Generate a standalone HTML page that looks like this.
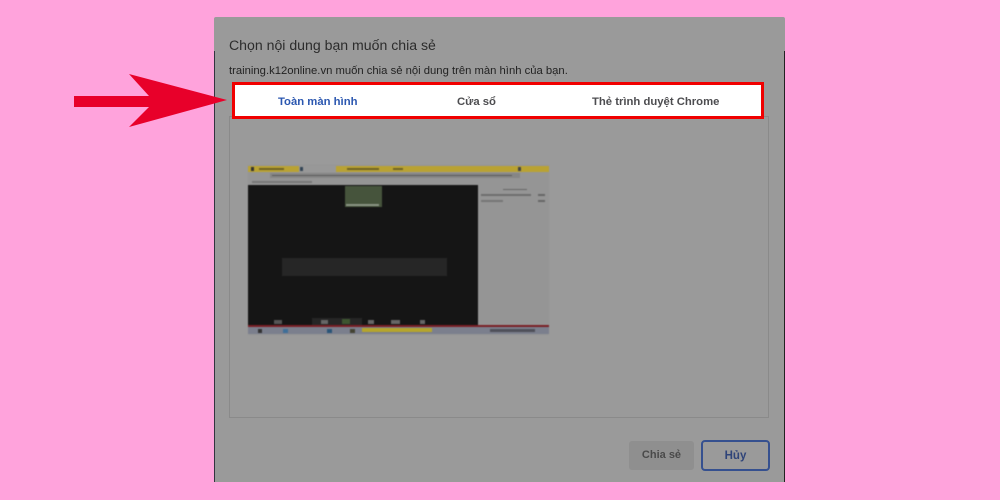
<!DOCTYPE html>
<html><head><meta charset="utf-8">
<style>
html,body{margin:0;padding:0}
body{width:1000px;height:500px;background:#ffa3dc;position:relative;overflow:hidden;font-family:"Liberation Sans","Noto Sans CJK SC",sans-serif}
div,span{position:absolute;white-space:nowrap}
.b{font-weight:bold;font-size:11.3px;line-height:14px}
</style></head><body>
<div style="left:214px;top:17px;width:571px;height:465px;background:#9a9a9a;border-radius:2px 2px 0 0"></div>
<div style="left:214px;top:51px;width:1px;height:431px;background:#33333f"></div>
<div style="left:784px;top:51px;width:1px;height:431px;background:#222"></div>
<div style="left:229px;top:36px;font-size:14.1px;line-height:18px;color:#2c2c2c">Chọn nội dung bạn muốn chia sẻ</div>
<div style="left:229px;top:64px;font-size:11.28px;line-height:14px;color:#222">training.k12online.vn muốn chia sẻ nội dung trên màn hình của bạn.</div>

<div style="left:229px;top:116px;width:538px;height:300px;border:1px solid #8a8a8a"></div>

<div style="left:0;top:0;width:1000px;height:500px;filter:blur(0.6px)">
<div style="left:248px;top:165px;width:301px;height:170px;background:#959595"></div>
<div style="left:248px;top:166px;width:301px;height:6px;background:#b9a233"></div>
<div style="left:299px;top:166px;width:37px;height:6px;background:#989898"></div>
<div style="left:251px;top:167px;width:3px;height:4px;background:#333"></div>
<div style="left:259px;top:168px;width:25px;height:2px;background:#6f6326"></div>
<div style="left:300px;top:167px;width:3px;height:4px;background:#345"></div>
<div style="left:347px;top:168px;width:32px;height:2px;background:#6f6326"></div>
<div style="left:393px;top:168px;width:10px;height:2px;background:#6f6326"></div>
<div style="left:518px;top:167px;width:3px;height:4px;background:#444"></div>
<div style="left:270px;top:173px;width:250px;height:5px;background:#868686"></div>
<div style="left:272px;top:175px;width:240px;height:1px;background:#5c5c5c"></div>
<div style="left:252px;top:181px;width:60px;height:2px;background:#777"></div>
<div style="left:248px;top:185px;width:230px;height:141px;background:#151515"></div>
<div style="left:345px;top:186px;width:37px;height:21px;background:#46543c"></div>
<div style="left:346px;top:204px;width:33px;height:2px;background:#8a9484"></div>
<div style="left:282px;top:258px;width:165px;height:18px;background:#262626"></div>
<div style="left:503px;top:189px;width:24px;height:1px;background:#666"></div>
<div style="left:481px;top:194px;width:50px;height:2px;background:#6e6e6e"></div>
<div style="left:481px;top:200px;width:22px;height:2px;background:#767676"></div>
<div style="left:538px;top:194px;width:7px;height:2px;background:#666"></div>
<div style="left:538px;top:200px;width:7px;height:2px;background:#666"></div>
<div style="left:312px;top:318px;width:50px;height:8px;background:#262626"></div>
<div style="left:342px;top:319px;width:8px;height:5px;background:#3d5530"></div>
<div style="left:274px;top:320px;width:8px;height:4px;background:#555"></div>
<div style="left:321px;top:320px;width:7px;height:4px;background:#666"></div>
<div style="left:368px;top:320px;width:6px;height:4px;background:#666"></div>
<div style="left:391px;top:320px;width:9px;height:4px;background:#666"></div>
<div style="left:420px;top:320px;width:5px;height:4px;background:#666"></div>
<div style="left:248px;top:325px;width:301px;height:2px;background:#7a1f25"></div>
<div style="left:248px;top:327px;width:301px;height:7px;background:#7b7f8d"></div>
<div style="left:362px;top:328px;width:70px;height:4px;background:#b5a52c"></div>
<div style="left:283px;top:329px;width:5px;height:4px;background:#3f6f98"></div>
<div style="left:327px;top:329px;width:5px;height:4px;background:#2a5578"></div>
<div style="left:258px;top:329px;width:4px;height:4px;background:#333"></div>
<div style="left:350px;top:329px;width:5px;height:4px;background:#443"></div>
<div style="left:490px;top:329px;width:45px;height:3px;background:#4f505a"></div>
</div>

<div style="left:629px;top:441px;width:65px;height:29px;background:#8f8f8f;border-radius:3px;color:#4a4a4a;font-size:11px;font-weight:bold;line-height:29px;text-align:center">Chia sẻ</div>
<div style="left:701px;top:440px;width:65px;height:27px;border:2px solid #35508f;border-radius:4px;color:#2f4479;font-size:11.5px;font-weight:bold;line-height:28px;text-align:center">Hủy</div>

<div style="left:232px;top:82px;width:526px;height:31px;background:#fff;border:3px solid #f00000"></div>
<div class="b" style="left:278px;top:95px;color:#2b57b0">Toàn màn hình</div>
<div class="b" style="left:457px;top:95px;color:#4d4d50">Cửa sổ</div>
<div class="b" style="left:592px;top:95px;color:#4d4d50">Thẻ trình duyệt Chrome</div>

<svg style="position:absolute;left:0;top:0" width="1000" height="500"><path d="M74 96H149L129 74L227 100L129 127L149 107H74Z" fill="#e8002a"/></svg>
</body></html>
